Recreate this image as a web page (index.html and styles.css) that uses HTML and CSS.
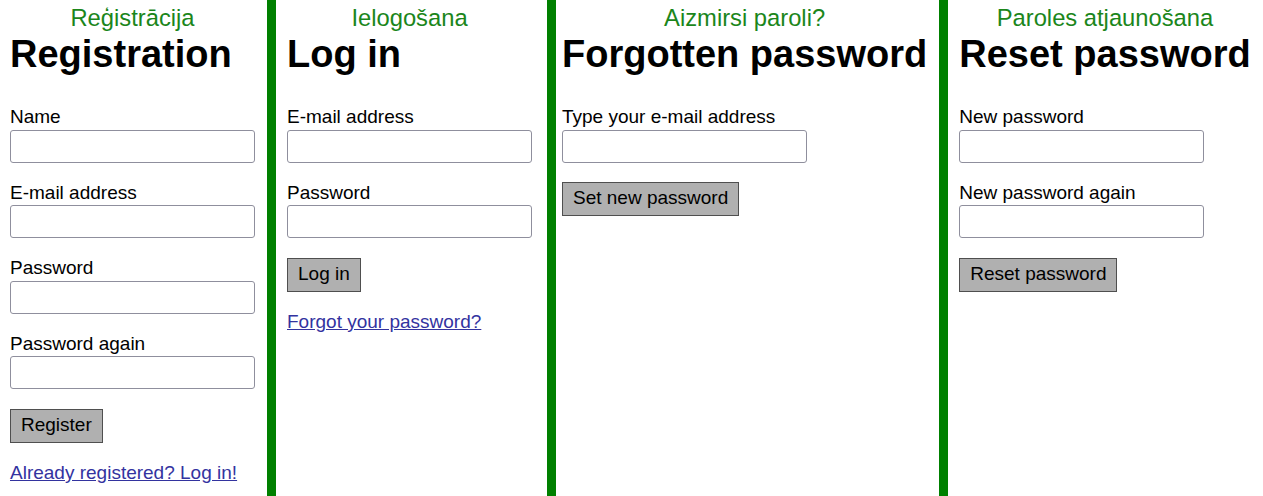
FILE: index.html
```html
<!DOCTYPE html>
<html lang="lv">
<head>
<meta charset="utf-8">
<title>Forms</title>
<link rel="stylesheet" href="styles.css">
</head>
<body>
<div class="page">
  <section class="col col-register">
    <div class="subtitle">Reģistrācija</div>
    <h1>Registration</h1>
    <div class="field"><label>Name</label><input type="text"></div>
    <div class="field"><label>E-mail address</label><input type="text"></div>
    <div class="field"><label>Password</label><input type="password"></div>
    <div class="field"><label>Password again</label><input type="password"></div>
    <button class="btn">Register</button>
    <p class="link"><a href="#">Already registered? Log in!</a></p>
  </section>
  <section class="col col-login">
    <div class="subtitle">Ielogošana</div>
    <h1>Log in</h1>
    <div class="field"><label>E-mail address</label><input type="text"></div>
    <div class="field"><label>Password</label><input type="password"></div>
    <button class="btn">Log in</button>
    <p class="link"><a href="#">Forgot your password?</a></p>
  </section>
  <section class="col col-forgot">
    <div class="subtitle">Aizmirsi paroli?</div>
    <h1>Forgotten password</h1>
    <div class="field"><label>Type your e-mail address</label><input type="text"></div>
    <button class="btn">Set new password</button>
  </section>
  <section class="col col-reset">
    <div class="subtitle">Paroles atjaunošana</div>
    <h1>Reset password</h1>
    <div class="field"><label>New password</label><input type="password"></div>
    <div class="field"><label>New password again</label><input type="password"></div>
    <button class="btn">Reset password</button>
  </section>
</div>
</body>
</html>
```
FILE: styles.css
```css
html, body {
  margin: 0;
  padding: 0;
  background: #fff;
}
body {
  font-family: "Liberation Sans", Arial, sans-serif;
  font-size: 19px;
  color: #000;
}
.page {
  display: flex;
  align-items: stretch;
  min-height: 100vh;
}
.col {
  flex: 0 0 auto;
  display: flex;
  flex-direction: column;
  align-items: flex-start;
}
.col + .col {
  border-left: 9px solid #008000;
}
.col-register { padding: 0 12px 0 10px; }
.col-login { padding: 0 15px 0 11px; }
.col-forgot { padding: 0 12px 0 6px; }
.col-reset { padding: 0 0 0 11px; }

.subtitle {
  align-self: stretch;
  text-align: center;
  color: #1b861b;
  font-size: 23.75px;
  line-height: 27px;
  margin-top: 4px;
}
h1 {
  font-size: 38px;
  line-height: 44px;
  font-weight: bold;
  margin: 1px 0 28px;
  white-space: nowrap;
}
.field {
  display: flex;
  flex-direction: column;
  align-items: flex-start;
  margin-bottom: 17px;
}
label {
  line-height: 22px;
  margin: 2px 0 1.5px;
  white-space: nowrap;
}
input {
  box-sizing: border-box;
  width: 245px;
  height: 33px;
  margin: 0;
  border: 1px solid #8f8f9d;
  border-radius: 3px;
  background: #fff;
  font: inherit;
}
.btn {
  margin-top: 2.5px;
  font: inherit;
  line-height: 22px;
  padding: 4px 10px 6px;
  background: #b0b0b0;
  color: #000;
  border: 1px solid #4f4f4f;
  border-radius: 0;
  white-space: nowrap;
}
.link {
  margin: 19.5px 0 0;
  line-height: 22px;
}
.link a {
  color: #33339f;
  text-decoration: underline;
}
```
